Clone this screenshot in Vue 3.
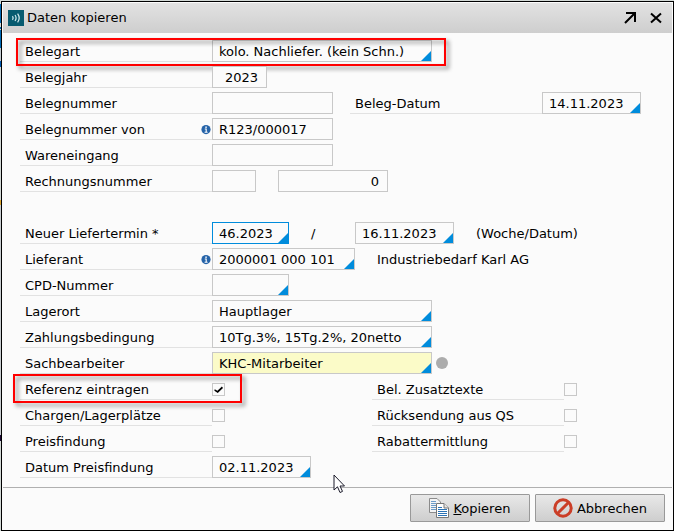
<script setup>
import { reactive } from 'vue'

const rows = reactive([
  { id: 'belegart', label: 'Belegart', mark: 'wide', fields: [{ v: 'kolo. Nachliefer. (kein Schn.)', w: 'w220', pick: true }] },
  { id: 'belegjahr', label: 'Belegjahr', fields: [{ v: '2023', w: 'w55', right: true }] },
  {
    id: 'belegnummer', label: 'Belegnummer', fields: [{ v: '', w: 'w121' }],
    second: { id: 'belegdatum', label: 'Beleg-Datum', place: 'at-date', field: { v: '14.11.2023', w: 'w99', pick: true } }
  },
  { id: 'belegvon', label: 'Belegnummer von', info: true, fields: [{ v: 'R123/000017', w: 'w121' }] },
  { id: 'wareneingang', label: 'Wareneingang', fields: [{ v: '', w: 'w121' }] },
  { id: 'rechnung', label: 'Rechnungsnummer', fields: [{ v: '', w: 'w44' }, { v: '0', w: 'w110', right: true, name: 'Rechnungsnummer 2' }] },
  { id: 'spacer', blank: true },
  {
    id: 'termin', label: 'Neuer Liefertermin *',
    fields: [{ v: '46.2023', w: 'w77', pick: true, focus: true }, { text: '/', slash: true }, { v: '16.11.2023', w: 'w99', pick: true, name: 'Liefertermin Datum' }, { text: '(Woche/Datum)' }]
  },
  { id: 'lieferant', label: 'Lieferant', info: true, fields: [{ v: '2000001 000 101', w: 'w143', pick: true }, { text: 'Industriebedarf Karl AG' }] },
  { id: 'cpd', label: 'CPD-Nummer', fields: [{ v: '', w: 'w77', pick: true }] },
  { id: 'lagerort', label: 'Lagerort', fields: [{ v: 'Hauptlager', w: 'w220', pick: true }] },
  { id: 'zahlung', label: 'Zahlungsbedingung', fields: [{ v: '10Tg.3%, 15Tg.2%, 20netto', w: 'w220', pick: true }] },
  { id: 'bearbeiter', label: 'Sachbearbeiter', dot: true, fields: [{ v: 'KHC-Mitarbeiter', w: 'w220', pick: true, yellow: true }] },
  { id: 'referenz', label: 'Referenz eintragen', mark: 'narrow', check: true, on: true, second: { id: 'zusatz', label: 'Bel. Zusatztexte', place: 'at-check', on: false } },
  { id: 'chargen', label: 'Chargen/Lagerplätze', check: true, on: false, second: { id: 'rueck', label: 'Rücksendung aus QS', place: 'at-check', on: false } },
  { id: 'preis', label: 'Preisfindung', check: true, on: false, second: { id: 'rabatt', label: 'Rabattermittlung', place: 'at-check', on: false } },
  { id: 'datumpreis', label: 'Datum Preisfindung', fields: [{ v: '02.11.2023', w: 'w99', pick: true }] }
])
</script>

<template>
  <div class="backdrop">
    <main class="dialog">
      <header class="titlebar">
        <svg class="logo" width="16" height="16" viewBox="0 0 16 16">
          <rect width="16" height="16" fill="#075b70" />
          <g fill="none" stroke="#d5edf0" stroke-width="1.2">
            <path d="M4.5 6.2Q5.8 8 4.5 9.8" />
            <path d="M7 5Q9.2 8 7 11" />
            <path d="M9.6 3.6Q12.8 8 9.6 12.4" />
          </g>
        </svg>
        <h1>Daten kopieren</h1>
        <button type="button" class="tool" aria-label="Maximieren">
          <svg width="14" height="14" viewBox="0 0 14 14" fill="none" stroke="#000" stroke-width="2">
            <path d="M3 2H12V11M12 2L2 12" />
          </svg>
        </button>
        <button type="button" class="tool" aria-label="Schließen">
          <svg width="14" height="14" viewBox="0 0 14 14" fill="none" stroke="#000" stroke-width="2">
            <path d="M2 2.5L12 11.5M12 2.5L2 11.5" />
          </svg>
        </button>
      </header>

      <form class="form" @submit.prevent>
        <div v-for="row in rows" :key="row.id" class="row">
          <template v-if="!row.blank">
            <label class="caption" :for="row.id">
              {{ row.label }}
              <svg v-if="row.info" class="info" width="10" height="10" viewBox="0 0 10 10">
                <circle cx="5" cy="4.6" r="4.6" fill="#2563a8" />
                <path d="M3.8 4H5.2V7M3.6 7.2H6.600" stroke="#fff" stroke-width="1.1" fill="none" />
                <rect x="4.3" y="1.500" width="1.500" height="1.400" fill="#fff" />
              </svg>
            </label>

            <div v-if="row.check" class="values">
              <input :id="row.id" v-model="row.on" type="checkbox" class="tick">
            </div>
            <div v-else class="values">
              <template v-for="(f, i) in row.fields" :key="i">
                <span v-if="f.text" class="plain" :class="{ slash: f.slash }">{{ f.text }}</span>
                <span v-else class="box" :class="[f.w, { pick: f.pick, focus: f.focus, yellow: f.yellow }]">
                  <input :id="i ? row.id + i : row.id" v-model="f.v" type="text" :aria-label="f.name" :class="{ right: f.right }">
                </span>
              </template>
              <span v-if="row.dot" class="dot"></span>
            </div>

            <div v-if="row.second" class="second" :class="row.second.place">
              <label class="caption" :for="row.second.id">{{ row.second.label }}</label>
              <span v-if="row.second.field" class="box pick" :class="row.second.field.w">
                <input :id="row.second.id" v-model="row.second.field.v" type="text">
              </span>
              <input v-else :id="row.second.id" v-model="row.second.on" type="checkbox" class="tick">
            </div>

            <span v-if="row.mark" class="mark" :class="row.mark"></span>
          </template>
        </div>
      </form>

      <footer class="actions">
        <button type="button" class="btn">
          <svg width="20" height="20" viewBox="0 0 20 20">
            <path d="M.5 .5H8L11.500 4V14.500H.5Z" fill="#f4f4f4" stroke="#8b8b8b" />
            <path d="M2 3.500H7M2 5.500H7M2 7.500H7M2 9.500H7M2 11.500H7" stroke="#6c9cc9" />
            <path d="M7.500 5.500H15L19.500 10V19.500H7.500Z" fill="#fff" stroke="#777" />
            <path d="M15 5.500V10H19.500" fill="#e5e5e5" stroke="#777" />
            <path d="M9 9.500H13M9 11.500H18M9 13.500H18M9 15.500H18M9 17.500H18" stroke="#2b73b5" />
          </svg>
          <span><u>K</u>opieren</span>
        </button>
        <button type="button" class="btn">
          <svg width="20" height="20" viewBox="0 0 20 20" fill="none" stroke="#cb3e27" stroke-width="3">
            <circle cx="10" cy="10" r="8.200" />
            <path d="M4.500 15.500L15.500 4.500" />
          </svg>
          <span>Abbrechen</span>
        </button>
      </footer>

      <svg class="pointer" width="13" height="20" viewBox="0 0 13 20">
        <path d="M1 1V16L4.500 12.800L7 18.500L9.500 17.400L7 12H11.500Z" fill="#fff" stroke="#1b1b2b" />
      </svg>
    </main>
  </div>
</template>

<style>
body {
  margin: 0;
}
</style>

<style scoped>
.backdrop {
  box-sizing: border-box;
  min-height: 100vh;
  padding: 1px 0 0 1px;
  background:
    linear-gradient(
      #d3d9d6 4px, #0069b4 4px 23px, #d3d9d6 23px 27px, #0069b4 27px 29px,
      #d3d9d6 29px 30px, #0069b4 30px 48px, #c4ccd2 48px 61px, #0058b0 61px 67px,
      #d3d9d6 67px 200px, #dba630 200px 205px, #c9cdd0 205px 435px,
      #1c0834 435px 441px, #d3d9d6 441px
    ) 0 0 / 1px 100% no-repeat,
    #d3d9d6;
  font: 13px/20px "DejaVu Sans", sans-serif;
  color: #000;
}

.dialog {
  position: relative;
  box-sizing: border-box;
  min-height: calc(100vh - 1px);
  display: flex;
  flex-direction: column;
  border: 1px solid #000;
  background: #fbfbfb;
}

.titlebar {
  display: flex;
  align-items: center;
  height: 30px;
  margin: 1px 1px 0;
  padding: 0 9px 0 5px;
  background: linear-gradient(#e2e2e2, #cecece);
}

h1 {
  flex: 1;
  margin: 0 0 0 3px;
  font-size: 13px;
  font-weight: normal;
}

.tool {
  display: flex;
  padding: 0;
  border: 0;
  background: none;
  margin-left: 12px;
}

.form {
  display: flex;
  flex-direction: column;
  gap: 4px;
  padding: 7px 8px 9px 18px;
}

.row {
  position: relative;
  display: flex;
  height: 22px;
}

.caption {
  box-sizing: border-box;
  display: flex;
  align-items: center;
  justify-content: space-between;
  width: 192px;
  padding: 2px 1px 0 5px;
  border-bottom: 1px solid #e2e2e2;
  white-space: nowrap;
}

.values,
.second {
  display: flex;
  align-items: center;
  white-space: nowrap;
}

.values {
  gap: 22px;
}

.plain {
  padding-top: 2px;
}

.slash {
  width: 22px;
}

.second .caption {
  height: 22px;
}

.at-date {
  margin-left: 17px;
}

.at-check {
  margin-left: 147px;
}

.box {
  position: relative;
  box-sizing: border-box;
  display: flex;
  height: 22px;
  border: 1px solid #c8c8c8;
  background: #fbfbfb;
}

.box input {
  box-sizing: border-box;
  width: 100%;
  padding: 1px 8px 0 6px;
  border: 0;
  outline: 0;
  background: none;
  color: inherit;
  font: inherit;
}

.box .right {
  text-align: right;
}

.pick::after {
  content: "";
  position: absolute;
  right: 0;
  bottom: 0;
  width: 10px;
  height: 10px;
  background: #008cdc;
  clip-path: polygon(100% 0, 100% 100%, 0 100%);
}

.focus {
  border-color: #008cdc;
}

.yellow {
  background: #fbfbc8;
}

.w44 { width: 44px; }
.w55 { width: 55px; }
.w77 { width: 77px; }
.w99 { width: 99px; }
.w110 { width: 110px; }
.w121 { width: 121px; }
.w143 { width: 143px; }
.w220 { width: 220px; }

.dot {
  width: 12px;
  height: 12px;
  margin-left: -18px;
  border-radius: 50%;
  background: #acacac;
}

.tick {
  appearance: none;
  box-sizing: border-box;
  width: 13px;
  height: 13px;
  margin: 1px 0 0;
  border: 1px solid #c8c8c8;
  background: #fbfbfb;
  display: grid;
  place-items: center;
}

.tick:checked::before {
  content: "";
  width: 9px;
  height: 7px;
  background: #000;
  clip-path: polygon(8% 45%, 38% 68%, 88% 8%, 100% 28%, 42% 100%, 4% 68%);
}

.mark {
  position: absolute;
  box-sizing: border-box;
  top: -2px;
  left: -4px;
  width: 430px;
  height: 28px;
  border: 2px solid #f00;
  filter: drop-shadow(3px 3px 2px #0007);
  pointer-events: none;
}

.mark.narrow {
  top: -4px;
  left: -7px;
  width: 229px;
  height: 29px;
}

.actions {
  display: flex;
  justify-content: flex-end;
  gap: 5px;
  margin: 0 1px;
  padding: 6px 7px 7px;
  border-top: 1px solid #b0b0b0;
}

.btn {
  box-sizing: border-box;
  display: flex;
  align-items: center;
  justify-content: center;
  gap: 4px;
  min-width: 120px;
  height: 28px;
  padding: 0 17px;
  border: 1px solid #999;
  border-radius: 1px;
  background: linear-gradient(#e8e8e8, #cecece);
  color: inherit;
  font: inherit;
}

.btn span {
  padding-top: 2px;
}

.pointer {
  position: absolute;
  left: 331px;
  top: 472px;
}
</style>
